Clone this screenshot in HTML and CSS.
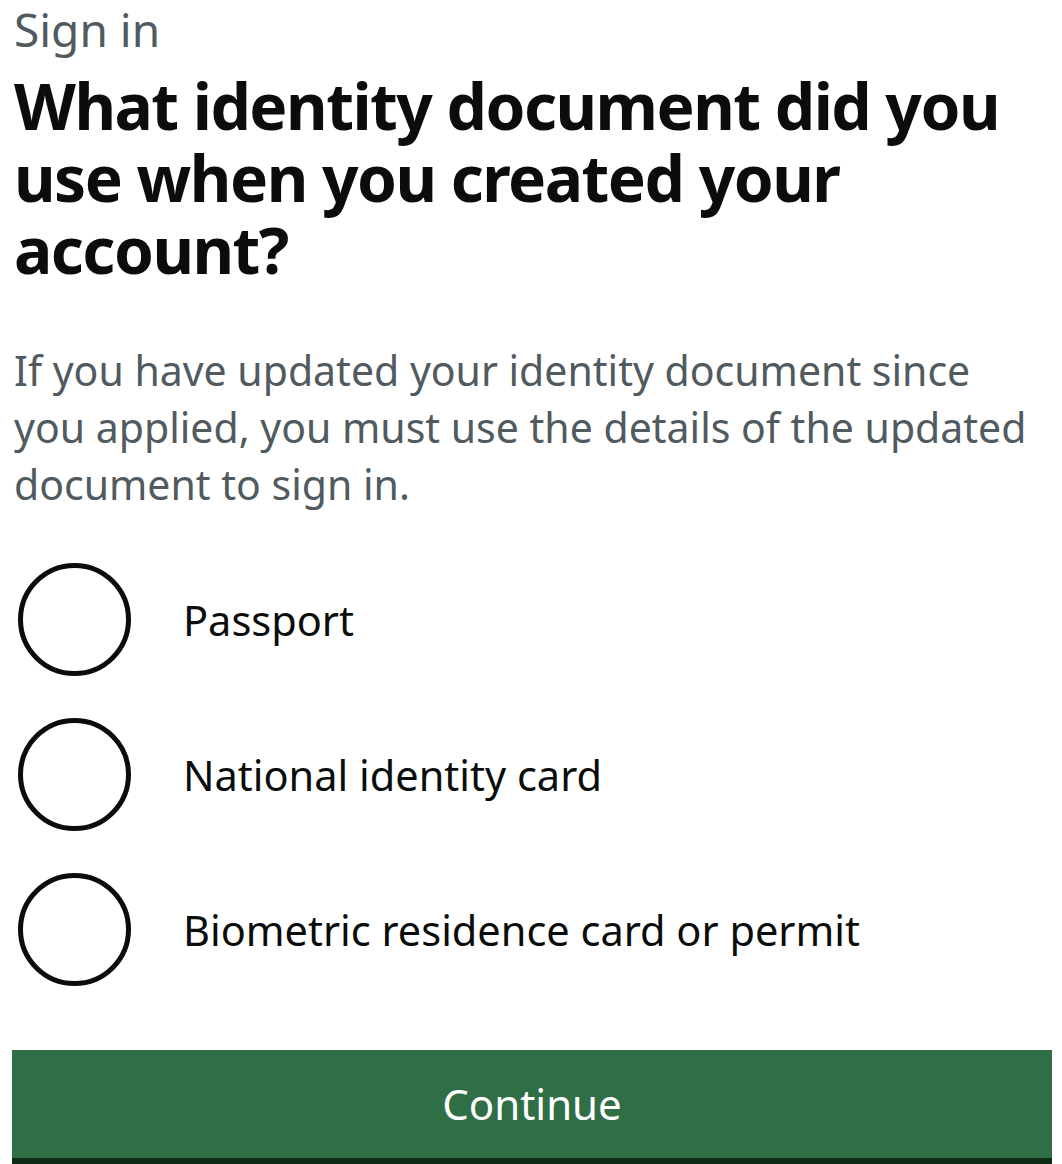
FILE: index.html
```html
<!DOCTYPE html>
<html lang="en">
<head>
<meta charset="utf-8">
<title>Sign in</title>
<link rel="stylesheet" href="styles.css">
</head>
<body>
<main class="page">
  <form class="form">
    <fieldset class="fieldset">
      <legend class="legend">
        <span class="caption">Sign in</span>
        <h1 class="heading">What identity document did you use when you created your account?</h1>
      </legend>
      <p class="hint">If you have updated your identity document since you applied, you must use the details of the updated document to sign in.</p>
      <div class="radios">
        <label class="radio">
          <input class="radio-input" type="radio" name="doc" value="passport">
          <span class="radio-circle"></span>
          <span class="radio-label">Passport</span>
        </label>
        <label class="radio">
          <input class="radio-input" type="radio" name="doc" value="national">
          <span class="radio-circle"></span>
          <span class="radio-label">National identity card</span>
        </label>
        <label class="radio">
          <input class="radio-input" type="radio" name="doc" value="brp">
          <span class="radio-circle"></span>
          <span class="radio-label">Biometric residence card or permit</span>
        </label>
      </div>
    </fieldset>
    <button class="button" type="button">Continue</button>
  </form>
</main>
</body>
</html>
```

FILE: styles.css
```css
html, body {
  margin: 0;
  padding: 0;
  background: #ffffff;
}

body {
  font-family: "Noto Sans", "Liberation Sans", Arial, sans-serif;
  color: #0b0c0c;
}

.page {
  padding: 0 10px 0 12px;
}

.form {
  display: flex;
  flex-direction: column;
}

.fieldset {
  border: 0;
  margin: 0;
  padding: 0;
  min-width: 0;
}

.legend {
  padding: 0;
  display: block;
}

.caption {
  display: block;
  font-size: 46px;
  line-height: 62px;
  margin-top: -2px;
  color: #505a5f;
  padding-left: 2px;
}

.heading {
  margin: 10px 0 0 0;
  font-size: 64px;
  line-height: 72px;
  font-weight: 700;
  letter-spacing: -1.5px;
  padding-left: 2px;
}

.hint {
  margin: 56px 0 0 0;
  max-width: 1024px;
  font-size: 41px;
  line-height: 57px;
  color: #505a5f;
  padding-left: 2px;
  letter-spacing: 0;
}

.radios {
  margin-top: 50px;
  display: flex;
  flex-direction: column;
  gap: 42px;
}

.radio {
  display: flex;
  align-items: center;
  gap: 52px;
  cursor: pointer;
}

.radio-input {
  position: absolute;
  opacity: 0;
  width: 1px;
  height: 1px;
}

.radio-circle {
  flex: none;
  box-sizing: border-box;
  width: 113px;
  height: 113px;
  margin-left: 6px;
  border: 5px solid #0b0c0c;
  border-radius: 50%;
}

.radio-label {
  font-size: 41.5px;
  line-height: 48px;
  color: #0b0c0c;
  letter-spacing: 0;
}

.button {
  margin-top: 64px;
  width: 1040px;
  height: 114px;
  border: 0;
  border-bottom: 6px solid #0c2a16;
  border-radius: 0;
  background: #306f45;
  color: #ffffff;
  font-family: "Noto Sans", "Liberation Sans", Arial, sans-serif;
  font-size: 42px;
  line-height: 1;
  padding: 0;
}
```
